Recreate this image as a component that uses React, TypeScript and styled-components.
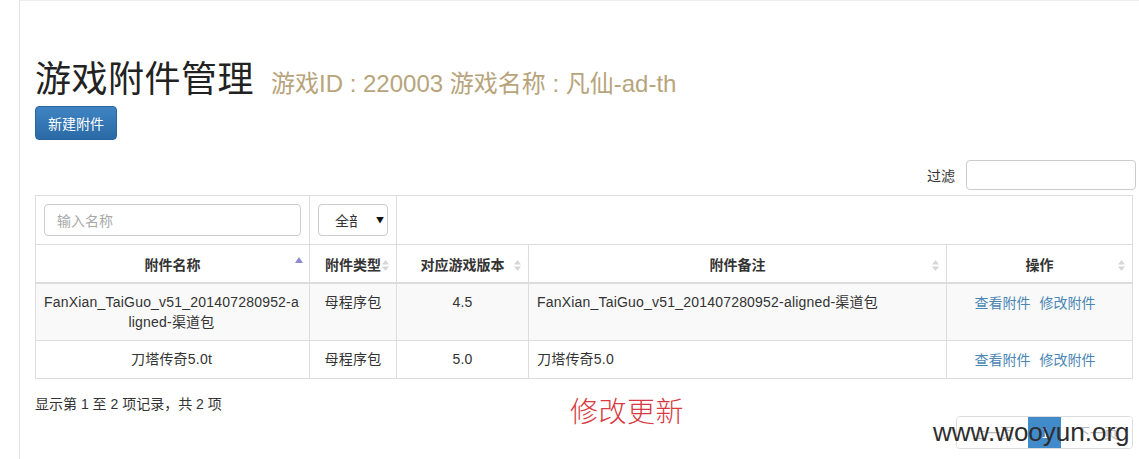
import React from "react";
import styled, { createGlobalStyle } from "styled-components";

const Global = createGlobalStyle`
  html, body { margin: 0; padding: 0; background: #fff; }
  body {
    font-family: "Liberation Sans", "Noto Sans CJK SC", sans-serif;
    font-size: 14px;
    line-height: 20px;
    color: #333;
  }
`;

const Page = styled.div`
  margin-left: 19px;
  min-height: 459px;
  box-sizing: border-box;
  border-left: 1px solid #e3e3e3;
  border-top: 1px solid #eeeeee;
  padding: 0 3px 0 15px;
  width: 1120px;
`;

const Heading = styled.div`
  display: flex;
  align-items: baseline;
  gap: 17px;
  padding-top: 55px;
`;

const Title = styled.h1`
  margin: 0;
  font-family: "Noto Sans CJK SC", serif;
  font-weight: 400;
  font-size: 36px;
  line-height: 40px;
  letter-spacing: 0.5px;
  color: #222;
`;

const Subtitle = styled.span`
  font-family: "Liberation Sans", "Noto Sans CJK SC", sans-serif;
  font-size: 24px;
  color: #b8a47c;
`;

const PrimaryButton = styled.button`
  margin-top: 10px;
  height: 34px;
  padding: 6px 12px;
  font-family: "Noto Sans CJK SC", sans-serif;
  font-size: 14px;
  line-height: 20px;
  color: #fff;
  background: linear-gradient(to bottom, #3f84c2 0%, #2a6aa6 100%);
  border: 1px solid #2b649c;
  border-radius: 4px;
  cursor: pointer;
`;

const FilterBar = styled.div`
  display: flex;
  justify-content: flex-end;
  align-items: center;
  gap: 11px;
  margin-top: 20px;
`;

const FilterLabel = styled.label`
  font-family: "Noto Sans CJK SC", sans-serif;
  font-size: 14px;
  color: #333;
`;

const TextInput = styled.input<{ $width: number }>`
  box-sizing: border-box;
  width: ${(p) => p.$width}px;
  height: ${(p) => (p.$width > 200 ? 32 : 30)}px;
  padding: 6px 12px;
  font-family: "Noto Sans CJK SC", sans-serif;
  font-size: 14px;
  color: #555;
  border: 1px solid #cccccc;
  border-radius: 4px;
  outline: none;
  &::placeholder { color: #a9a9a9; }
`;

const Table = styled.table`
  margin-top: 5px;
  width: 1097px;
  table-layout: fixed;
  border-collapse: collapse;
  border: 1px solid #dddddd;
`;

const FilterCell = styled.td`
  padding: 8px;
  border: 1px solid #dddddd;
  vertical-align: top;
`;

const Th = styled.th`
  position: relative;
  padding: 9px 8px 8px;
  border: 1px solid #dddddd;
  border-bottom: 2px solid #dddddd;
  font-family: "Noto Sans CJK SC", sans-serif;
  font-weight: 700;
  font-size: 14px;
  line-height: 20px;
  color: #333;
  text-align: center;
`;

const Tr = styled.tr<{ $striped?: boolean }>`
  background: ${(p) => (p.$striped ? "#f9f9f9" : "#fff")};
`;

const Td = styled.td<{ $align?: "left" | "center"; $narrow?: boolean }>`
  padding: 8px ${(p) => (p.$narrow ? 10 : 8)}px 8px 8px;
  border: 1px solid #dddddd;
  text-align: ${(p) => p.$align ?? "center"};
  vertical-align: top;
  word-break: break-all;
  letter-spacing: 0.2px;
  color: #333;
`;

const SortIcon = styled.svg`
  position: absolute;
  right: 7px;
  top: 15px;
`;

const SelectBox = styled.div`
  box-sizing: border-box;
  width: 70px;
  height: 32px;
  display: flex;
  align-items: center;
  padding-left: 16px;
  border: 1px solid #cccccc;
  border-radius: 4px;
  background: #fff;
  font-family: "Noto Sans CJK SC", sans-serif;
  font-size: 14px;
  color: #333;
`;

const SelectText = styled.span`
  width: 22px;
  overflow: hidden;
  white-space: nowrap;
`;

const SelectArrow = styled.span`
  margin-left: 19px;
  font-size: 8px;
  color: #111;
`;

const Link = styled.a`
  color: #4a86b4;
  text-decoration: none;
  font-family: "Noto Sans CJK SC", sans-serif;
  letter-spacing: 0;
  margin-right: 9px;
`;

const Footer = styled.div`
  position: relative;
  display: flex;
  justify-content: space-between;
  align-items: flex-start;
  width: 1098px;
`;

const Info = styled.div`
  margin-top: 15px;
  font-family: "Liberation Sans", "Noto Sans CJK SC", sans-serif;
  font-size: 14px;
  color: #333;
`;

const Pagination = styled.ul`
  display: flex;
  margin: 37px 0 0 0;
  padding: 0;
  list-style: none;
  border: 1px solid #dddddd;
  border-radius: 4px;
  overflow: hidden;
`;

const PageItem = styled.li<{ $active?: boolean }>`
  box-sizing: border-box;
  height: 31px;
  padding: ${(p) => (p.$active ? "5px 12px 5px 13px" : "5px 14px")};
  font-family: "Noto Sans CJK SC", sans-serif;
  font-size: 14px;
  line-height: 20px;
  color: ${(p) => (p.$active ? "#fff" : "#bbb")};
  background: ${(p) => (p.$active ? "#428bca" : "#fff")};
  border-left: ${(p) => (p.$active ? "none" : "1px solid transparent")};
`;

const Stamp = styled.div`
  position: absolute;
  left: 535px;
  top: 15px;
  font-family: "Noto Sans CJK SC", sans-serif;
  font-weight: 300;
  font-size: 28px;
  line-height: 32px;
  letter-spacing: 0.5px;
  color: #d83a42;
`;

const Watermark = styled.div`
  position: absolute;
  left: 898px;
  top: 40px;
  font-family: "Liberation Sans", sans-serif;
  font-size: 26px;
  line-height: 26px;
  color: #2e2e2e;
`;

const Both = () => (
  <SortIcon width="7" height="11" viewBox="0 0 7 11">
    <path d="M3.5 0 L7 4.5 L0 4.5 Z" fill="#d6d6d6" />
    <path d="M3.5 11 L7 6.5 L0 6.5 Z" fill="#d6d6d6" />
  </SortIcon>
);

const Asc = () => (
  <SortIcon width="8" height="11" viewBox="0 0 8 11" style={{ top: 12, right: 6 }}>
    <path d="M4 0 L8 6 L0 6 Z" fill="#8b8bd2" />
  </SortIcon>
);

const rows = [
  {
    name: "FanXian_TaiGuo_v51_201407280952-aligned-渠道包",
    type: "母程序包",
    ver: "4.5",
    note: "FanXian_TaiGuo_v51_201407280952-aligned-渠道包",
  },
  { name: "刀塔传奇5.0t", type: "母程序包", ver: "5.0", note: "刀塔传奇5.0" },
];

export default function App() {
  return (
    <>
      <Global />
      <Page>
        <Heading>
          <Title>游戏附件管理</Title>
          <Subtitle>游戏ID : 220003 游戏名称 : 凡仙-ad-th</Subtitle>
        </Heading>
        <PrimaryButton>新建附件</PrimaryButton>
        <FilterBar>
          <FilterLabel>过滤</FilterLabel>
          <TextInput $width={170} />
        </FilterBar>
        <Table>
          <colgroup>
            <col style={{ width: 274 }} />
            <col style={{ width: 87 }} />
            <col style={{ width: 132 }} />
            <col style={{ width: 418 }} />
            <col style={{ width: 186 }} />
          </colgroup>
          <thead>
            <tr>
              <FilterCell>
                <TextInput $width={257} placeholder="输入名称" />
              </FilterCell>
              <FilterCell>
                <SelectBox>
                  <SelectText>全部</SelectText>
                  <SelectArrow>▼</SelectArrow>
                </SelectBox>
              </FilterCell>
              <FilterCell colSpan={3} />
            </tr>
            <tr>
              <Th>附件名称<Asc /></Th>
              <Th>附件类型<Both /></Th>
              <Th>对应游戏版本<Both /></Th>
              <Th>附件备注<Both /></Th>
              <Th>操作<Both /></Th>
            </tr>
          </thead>
          <tbody>
            {rows.map((r, i) => (
              <Tr key={i} $striped={i === 0}>
                <Td $narrow>{r.name}</Td>
                <Td>{r.type}</Td>
                <Td>{r.ver}</Td>
                <Td $align="left">{r.note}</Td>
                <Td>
                  <Link href="#">查看附件</Link>
                  <Link href="#">修改附件</Link>
                </Td>
              </Tr>
            ))}
          </tbody>
        </Table>
        <Footer>
          <Info>显示第 1 至 2 项记录，共 2 项</Info>
          <Pagination>
            <PageItem>上一页</PageItem>
            <PageItem $active>1</PageItem>
            <PageItem>下一页</PageItem>
          </Pagination>
          <Stamp>修改更新</Stamp>
          <Watermark>www.wooyun.org</Watermark>
        </Footer>
      </Page>
    </>
  );
}
